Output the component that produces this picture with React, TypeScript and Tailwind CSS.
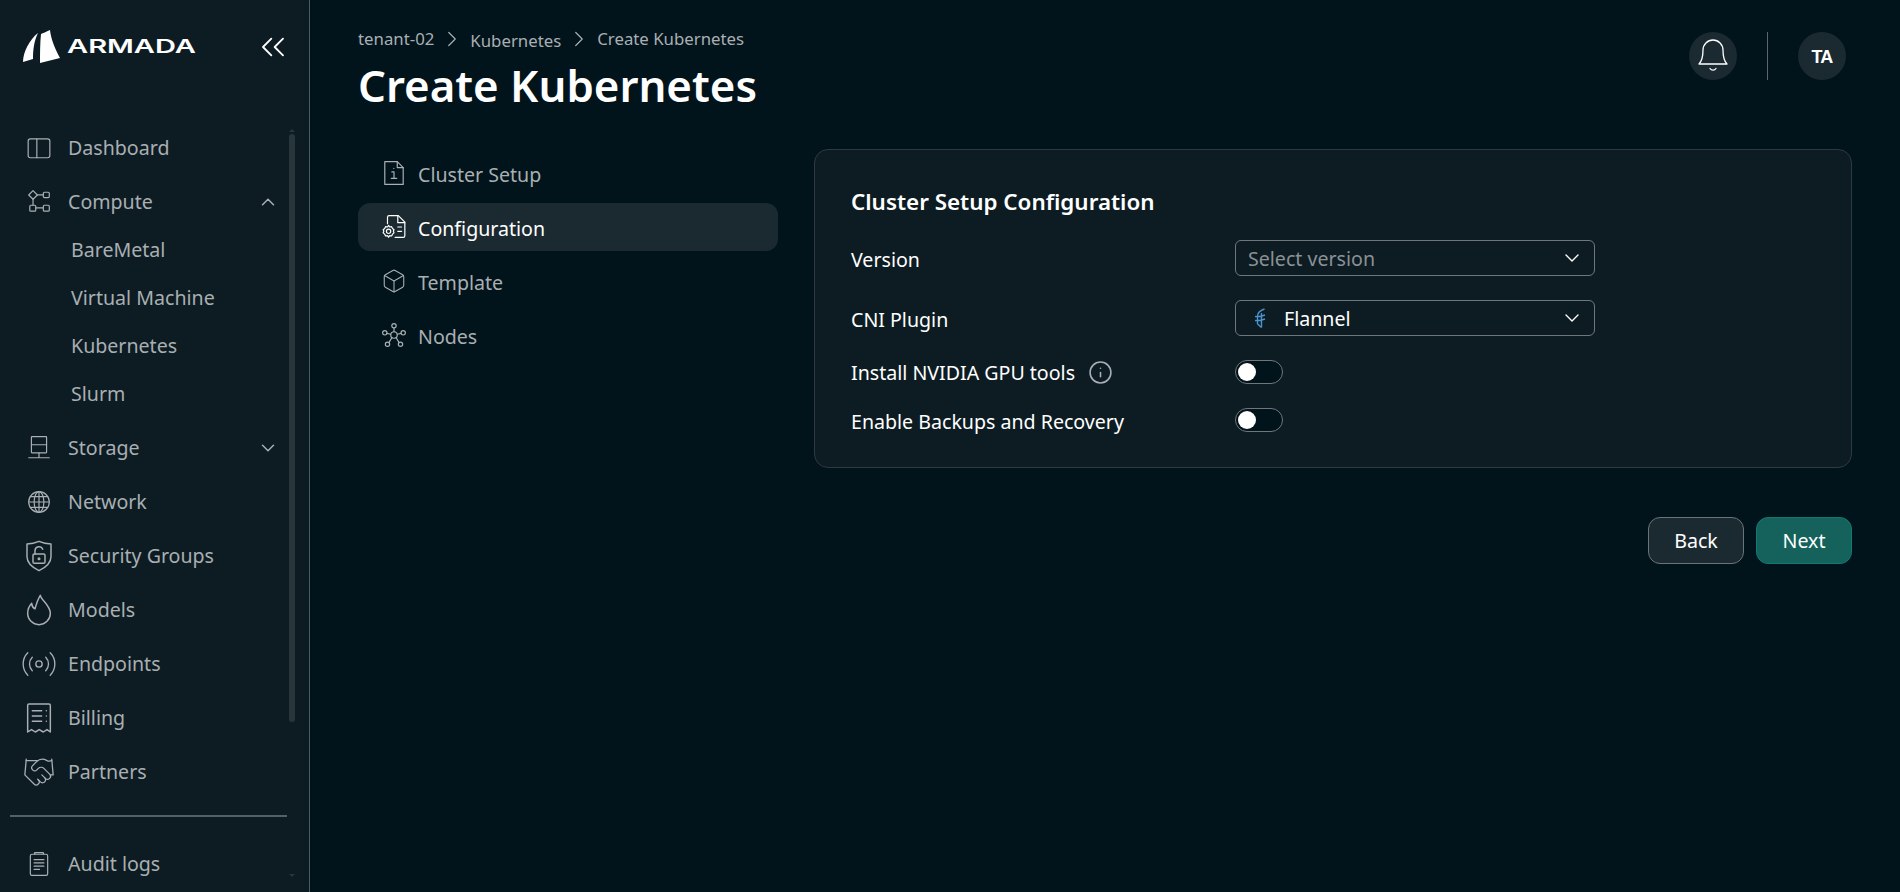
import { Box, ChevronDown, ChevronRight, ChevronUp, ChevronsLeft, Handshake, Info, Radio } from 'lucide-react';
import type { ReactNode } from 'react';

function Svg({ children, className = 'h-6 w-6' }: { children: ReactNode; className?: string }) {
  return (
    <svg viewBox="0 0 24 24" fill="none" stroke="currentColor" strokeWidth={1.1} strokeLinecap="round" strokeLinejoin="round" className={className}>
      {children}
    </svg>
  );
}

const DashboardIcon = () => (
  <Svg className="h-[26px] w-[26px]">
    <rect x="2" y="3.500" width="20" height="17.500" rx="2" />
    <path d="M10 3.500V21" />
  </Svg>
);

const ComputeIcon = () => (
  <Svg className="h-[26px] w-[26px]">
    <path d="M6.500 1.500 10.500 5.500l-4 4-4-4z" />
    <rect x="16" y="3" width="5.500" height="5" rx="1" />
    <rect x="3.500" y="15" width="5.500" height="5.500" rx="1" />
    <rect x="16" y="15" width="5.500" height="5.500" rx="1" />
    <path d="M10.500 5.500H16M9 17.500h7M6.500 9.500V15" />
  </Svg>
);

const StorageIcon = () => (
  <Svg className="h-[26px] w-[26px]">
    <rect x="5" y="1.500" width="14" height="15" rx="0.500" />
    <path d="M5 9h14M12 16.500V21M2.500 21h19" />
  </Svg>
);

const GlobeIcon = () => (
  <Svg className="h-[26px] w-[26px]">
    <circle cx="12" cy="12" r="9.500" />
    <ellipse cx="12" cy="12" rx="4.500" ry="9.500" />
    <path d="M12 2.500v19M2.500 12h19M4 7h16M4 17h16" />
  </Svg>
);

const ShieldIcon = () => (
  <Svg className="h-[32px] w-[32px]">
    <path d="M12 1c3 1.300 6 1.900 9 2v9.500c0 4.500-4 8-9 10.500-5-2.500-9-6-9-10.500V3c3-.1 6-.7 9-2z" />
    <rect x="7.500" y="10.500" width="9" height="7" rx="1" />
    <path d="M9 10.500V8a3 3 0 0 1 5.800-1" />
    <circle cx="12" cy="14" r="0.600" />
  </Svg>
);

const FlameIcon = () => (
  <Svg className="h-[32px] w-[32px]">
    <path d="M13 1c.5 3.500 7.500 7.500 7.500 13.500a8.500 8.500 0 0 1-17 0c0-3 1.200-5.500 3-7.500.2 2 1 3.500 2.500 4.200C10 7.500 11 4 13 1z" />
  </Svg>
);

const ReceiptIcon = () => (
  <Svg className="h-8 w-8">
    <path d="M3.500 22.500V2.500a1 1 0 0 1 1-1h15a1 1 0 0 1 1 1v20l-2.500-1.800-2.800 1.800-3-1.800-3 1.800-2.800-1.800z" />
    <path d="M7 6.500h7M7 10.500h7M7 14.500h7M17.500 6.500h.01M17.500 10.500h.01M17.500 14.500h.01" />
  </Svg>
);

const ClipboardIcon = () => (
  <Svg className="h-[26px] w-[26px]">
    <rect x="4" y="3" width="16" height="19.500" rx="1.500" />
    <path d="M8 3V1.500h8V3" />
    <path d="M7.500 8h9M7.500 11h9M7.500 14h9M7.500 17h5" />
  </Svg>
);

const FileInfoIcon = () => (
  <Svg className="h-[26px] w-[26px]">
    <path d="M3.500 1.500H15l5.500 5.500v15.500h-17z" />
    <path d="M15 1.500V7h5.500" />
    <path d="M10 11h2v6M9.500 17h5M11.800 7.800h.01" />
  </Svg>
);

const FileGearIcon = () => (
  <Svg className="h-[26px] w-[26px]">
    <path d="M6 9V3a1.500 1.500 0 0 1 1.500-1.500H16l6 6V20a1.500 1.500 0 0 1-1.500 1.500H13" />
    <path d="M15.500 1.500V8H22" />
    <path d="M15.500 12H19M15.500 16H19" />
    <circle cx="7" cy="16" r="2" />
    <path d="M7 10.500l1 1.500 1.800-.300.800 1.700 1.400 1.200-.6 1.400.6 1.400-1.400 1.200-.8 1.700-1.800-.300-1 1.500-1-1.500-1.800.300-.8-1.700L2 17.400l.600-1.400-.600-1.400 1.400-1.200.8-1.700 1.800.300z" />
  </Svg>
);

const NodesIcon = () => (
  <Svg className="h-[26px] w-[26px]">
    <circle cx="12" cy="12" r="3" />
    <circle cx="12" cy="3.500" r="2" />
    <circle cx="3.500" cy="10" r="2" />
    <circle cx="20.500" cy="10" r="2" />
    <circle cx="6" cy="20.500" r="2" />
    <circle cx="18" cy="20.500" r="2" />
    <path d="M12 5.500V9M5.500 10.500 9 11.300M18.500 10.500 15 11.300M7.300 19l2.800-4.700M16.700 19l-2.800-4.700" />
  </Svg>
);

const FlannelIcon = () => (
  <svg viewBox="0 0 12 20" fill="none" stroke="#4b93cf" strokeWidth={1.4} className="h-[20px] w-[12px]">
    <path d="M3.500 16V8C3.500 4.500 6 2.500 10.500 1M7.500 19.500V5M1 8.500c3 .5 6 0 10-1.500M1 12.500c3 .5 6 0 10-1.500M3.500 16l4 3.500" />
  </svg>
);

const BellIcon = () => (
  <svg viewBox="0 0 48 48" fill="none" stroke="currentColor" strokeWidth={1.3} strokeLinecap="round" strokeLinejoin="round" className="h-12 w-12">
    <path d="M10 32c3-3 4-7 4-14a10 10 0 0 1 20 0c0 7 1 11 4 14z" />
    <path d="M21 36.500a3.500 3.500 0 0 0 6 0" />
  </svg>
);

function NavRow({ icon, label, chevron }: { icon: ReactNode; label: string; chevron?: 'up' | 'down' }) {
  return (
    <div className="flex h-[54px] items-center">
      <span className="flex w-[68px] shrink-0 items-center justify-center pl-[10px]">{icon}</span>
      <span className="flex-1 text-[19.6px] leading-[28px]">{label}</span>
      {chevron === 'up' && <ChevronUp className="h-[22px] w-[22px]" strokeWidth={1.6} />}
      {chevron === 'down' && <ChevronDown className="h-[22px] w-[22px]" strokeWidth={1.6} />}
    </div>
  );
}

function SubRow({ label }: { label: string }) {
  return <div className="flex h-12 items-center pl-[71px] text-[19.6px] leading-[28px]">{label}</div>;
}

function Sidebar() {
  return (
    <aside className="flex h-[892px] w-[310px] shrink-0 flex-col overflow-hidden border-r border-[#4d5a60] bg-[#0d1c23] text-[#a9afb2]">
      <div className="flex h-[112px] shrink-0 items-start justify-between pl-[22px] pr-[16px] pt-[28px]">
        <div className="flex items-center gap-[5px]">
          <svg viewBox="0 0 40 36" fill="#ffffff" className="h-9 w-10">
            <path d="M16 5C8 11 1 24 1 34l10-3c0-9 1-18 5-26z" />
            <path d="M28 2c-4 2-7 3-9 4-1 9-1 20-1 29l20-5C33 21 29 11 28 2z" />
          </svg>
          <span className="inline-block w-[128px] origin-left scale-x-[1.57] font-['Inter'] text-[18.5px] font-semibold leading-none text-white">ARMADA</span>
        </div>
        <ChevronsLeft className="-mt-[1px] h-10 w-10 text-white" strokeWidth={1.1} />
      </div>
      <div className="flex min-h-0 flex-1">
        <nav className="min-w-0 flex-1 pt-[9px]">
          <NavRow icon={<DashboardIcon />} label="Dashboard" />
          <NavRow icon={<ComputeIcon />} label="Compute" chevron="up" />
          <div className="-mt-[3px] pb-[3px]">
            <SubRow label="BareMetal" />
            <SubRow label="Virtual Machine" />
            <SubRow label="Kubernetes" />
            <SubRow label="Slurm" />
          </div>
          <NavRow icon={<StorageIcon />} label="Storage" chevron="down" />
          <NavRow icon={<GlobeIcon />} label="Network" />
          <NavRow icon={<ShieldIcon />} label="Security Groups" />
          <NavRow icon={<FlameIcon />} label="Models" />
          <NavRow icon={<Radio className="h-[38px] w-[38px]" strokeWidth={0.85} />} label="Endpoints" />
          <NavRow icon={<ReceiptIcon />} label="Billing" />
          <NavRow icon={<Handshake className="h-[34px] w-[34px]" strokeWidth={0.9} />} label="Partners" />
          <div className="ml-[10px] mr-[-8px] mt-[16px] mb-[20px] h-[2px] bg-[#565f64]" />
          <NavRow icon={<ClipboardIcon />} label="Audit logs" />
        </nav>
        <div className="ml-[10px] mr-[14px] flex w-[6px] shrink-0 flex-col items-center pt-[17px]">
          <div className="mb-[2px] h-0 w-0 border-x-[3px] border-b-[3px] border-x-transparent border-b-[#28363c]" />
          <div className="h-[588px] w-[6px] rounded-[3px] bg-[#28363c]" />
          <div className="mt-[152px] h-0 w-0 border-x-[3px] border-t-[3px] border-x-transparent border-t-[#28363c]" />
        </div>
      </div>
    </aside>
  );
}

const steps = [
  { label: 'Cluster Setup', icon: <FileInfoIcon /> },
  { label: 'Configuration', icon: <FileGearIcon />, active: true },
  { label: 'Template', icon: <Box className="h-[26px] w-[26px]" strokeWidth={1} /> },
  { label: 'Nodes', icon: <NodesIcon /> },
];

function SelectBox({ children }: { children: ReactNode }) {
  return (
    <div className="flex h-[36px] w-[360px] items-center justify-between rounded-[6px] border border-[#70777b] pl-[12px] pr-[10px]">
      <div className="flex translate-y-[1px] items-center text-[19.6px] leading-[28px]">{children}</div>
      <ChevronDown className="h-6 w-6 text-white" strokeWidth={1.4} />
    </div>
  );
}

function Toggle() {
  return (
    <div className="flex h-6 w-12 items-center rounded-full border border-[#70777b] bg-[#01131b] pl-[2px]">
      <div className="h-[18px] w-[18px] rounded-full bg-white" />
    </div>
  );
}

export default function App() {
  return (
    <div className="flex h-[892px] w-[1900px] overflow-hidden bg-[#01131b] font-['Noto_Sans',sans-serif]">
      <Sidebar />
      <main className="min-w-0 flex-1 pl-[48px] pr-[48px]">
        <div className="flex h-[149px] items-start justify-between">
          <div className="pt-[26px]">
            <div className="flex items-center text-[16.8px] leading-[24px] text-[#a9afb2]">
              <span>tenant-02</span>
              <ChevronRight className="mx-[5px] h-[26px] w-[26px]" strokeWidth={1.1} />
              <span className="translate-y-[2px]">Kubernetes</span>
              <ChevronRight className="mx-[5px] h-[26px] w-[26px]" strokeWidth={1.1} />
              <span>Create Kubernetes</span>
            </div>
            <h1 className="mt-[3px] text-[43.8px] font-semibold leading-[60px] text-white">Create Kubernetes</h1>
          </div>
          <div className="flex items-center pr-[6px] pt-[32px]">
            <div className="flex h-12 w-12 items-center justify-center rounded-full bg-[#1b2a31] text-white">
              <BellIcon />
            </div>
            <div className="ml-[30px] mr-[30px] h-12 w-px bg-[#5d6569]" />
            <div className="flex h-12 w-12 items-center justify-center rounded-full bg-[#1b2a31] pt-[2px] font-['Liberation_Sans'] text-[18px] font-bold tracking-[-0.8px] text-white">TA</div>
          </div>
        </div>
        <div className="flex items-start gap-[36px]">
          <div className="w-[420px] shrink-0">
            {steps.map((s) => (
              <div
                key={s.label}
                className={`mb-[6px] flex h-12 items-center rounded-[12px] pl-[23px] text-[19.6px] ${s.active ? 'bg-[#1b2a31] text-white' : 'text-[#a9afb2]'}`}
              >
                <span className="mr-[11px] flex h-[26px] w-[26px] items-center justify-center">{s.icon}</span>
                <span className="translate-y-[2px]">{s.label}</span>
              </div>
            ))}
          </div>
          <div className="min-w-0 flex-1">
            <section className="h-[319px] rounded-[14px] border border-[#2f3a40] bg-[#0d1c23] pl-[36px] pt-[35px] text-white">
              <h2 className="text-[22.4px] font-semibold leading-[34px]">Cluster Setup Configuration</h2>
              <div className="mt-[21px] grid grid-cols-[384px_1fr] items-center gap-y-[24px] text-[19.6px] leading-6">
                <div className="translate-y-[2px]">Version</div>
                <SelectBox><span className="text-[#8a9194]">Select version</span></SelectBox>
                <div className="translate-y-[2px]">CNI Plugin</div>
                <SelectBox>
                  <span className="ml-[6px] mr-[18px] -mt-[3px]"><FlannelIcon /></span>
                  Flannel
                </SelectBox>
                <div className="flex h-6 translate-y-[1px] items-center">
                  Install NVIDIA GPU tools
                  <Info className="ml-[13px] h-[25px] w-[25px] -translate-y-[1px] text-[#a9afb2]" strokeWidth={1.5} />
                </div>
                <Toggle />
                <div className="translate-y-[2px]">Enable Backups and Recovery</div>
                <Toggle />
              </div>
            </section>
            <div className="mt-[49px] flex justify-end gap-[12px] text-[19.6px] text-white">
              <button type="button" className="h-[47px] w-[96px] rounded-[12px] border border-[#6b7377] bg-[#1b2a31]">Back</button>
              <button type="button" className="h-[47px] w-[96px] rounded-[12px] border border-[#0f7a6f] bg-[#14625b]">Next</button>
            </div>
          </div>
        </div>
      </main>
    </div>
  );
}
